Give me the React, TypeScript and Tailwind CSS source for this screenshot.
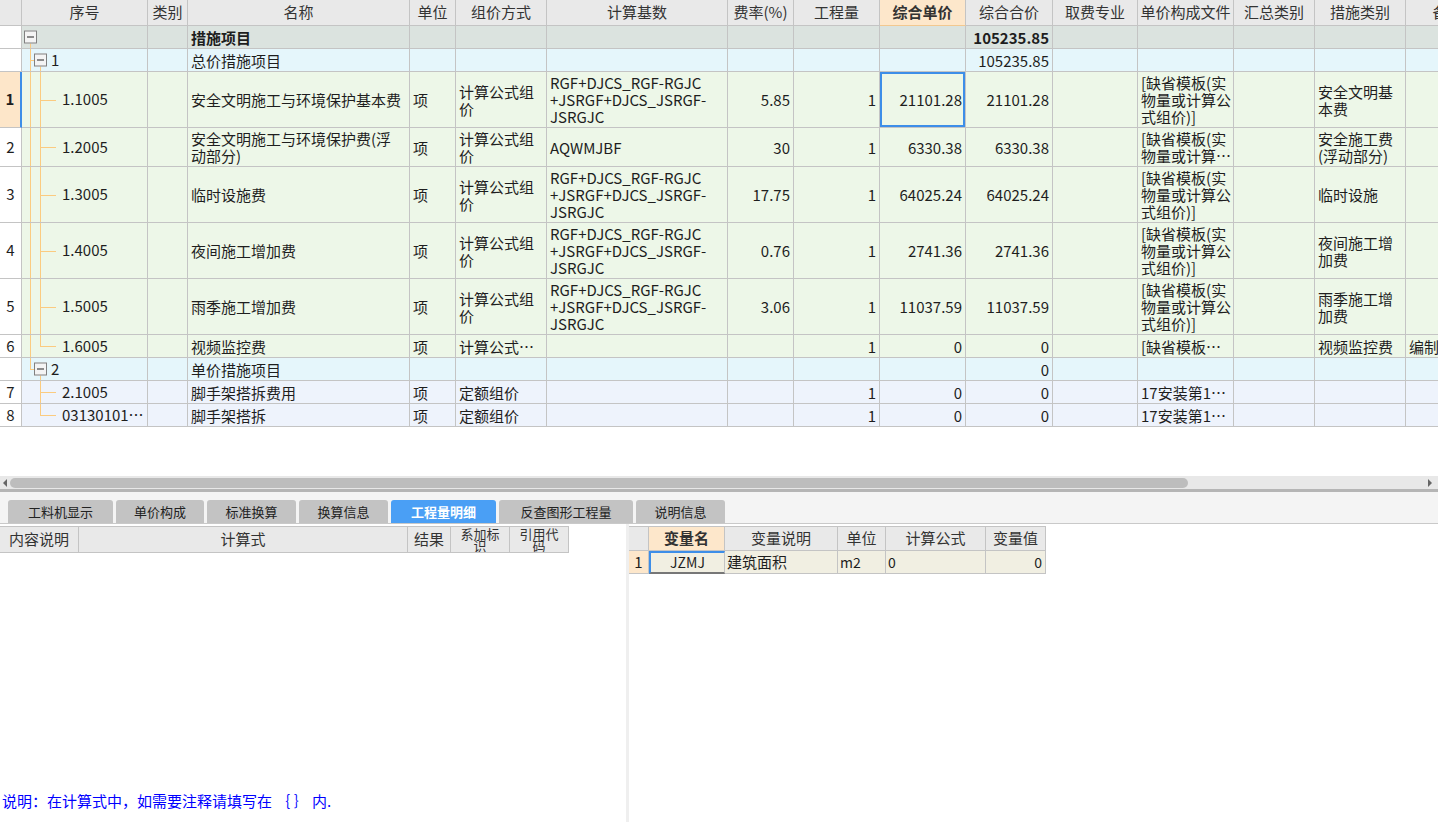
import React from "react";

type Align = "l" | "c" | "r";
type VMode = "full" | "top" | "bottom" | undefined;

interface Tree {
  v0?: VMode;
  v1?: VMode;
  box?: 0 | 1;
  stub?: boolean;
  label?: string;
}

interface Row {
  h: string;
  bg: string;
  hdr?: string;
  sel?: boolean;
  tree: Tree;
  bold?: boolean;
  cells: string[]; // 类别 名称 单位 组价方式 计算基数 费率 工程量 综合单价 综合合价 取费专业 单价构成文件 汇总类别 措施类别 备注
}

const W = ["w-[22px]", "w-[126px]", "w-[40px]", "w-[222px]", "w-[46px]", "w-[91px]", "w-[181px]", "w-[66px]", "w-[86px]", "w-[86px]", "w-[87px]", "w-[85px]", "w-[96px]", "w-[81px]", "w-[91px]", "w-[84px]"];
const HEAD = ["", "序号", "类别", "名称", "单位", "组价方式", "计算基数", "费率(%)", "工程量", "综合单价", "综合合价", "取费专业", "单价构成文件", "汇总类别", "措施类别", "备注"];
// alignment of columns 2..15
const AL: Align[] = ["l", "l", "l", "l", "l", "r", "r", "r", "r", "l", "l", "l", "l", "l"];

const BASE3 = "RGF+DJCS_RGF-RGJC\n+JSRGF+DJCS_JSRGF-\nJSRGJC";
const FILE3 = "[缺省模板(实\n物量或计算公\n式组价)]";
const CHILD: Tree = { v0: "full", v1: "full", stub: true };

const ROWS: Row[] = [
  { h: "h-[23px]", bg: "bg-[#dbe3df]", tree: { v0: "bottom", box: 0 }, bold: true, cells: ["", "措施项目", "", "", "", "", "", "", "105235.85", "", "", "", "", ""] },
  { h: "h-[23px]", bg: "bg-[#e5f6fb]", tree: { v0: "full", box: 1, v1: "bottom", label: "1" }, cells: ["", "总价措施项目", "", "", "", "", "", "", "105235.85", "", "", "", "", ""] },
  { h: "h-[56px]", bg: "bg-[#edf7e8]", hdr: "1", sel: true, tree: { ...CHILD, label: "1.1005" }, cells: ["", "安全文明施工与环境保护基本费", "项", "计算公式组\n价", BASE3, "5.85", "1", "21101.28", "21101.28", "", FILE3, "", "安全文明基\n本费", ""] },
  { h: "h-[39px]", bg: "bg-[#edf7e8]", hdr: "2", tree: { ...CHILD, label: "1.2005" }, cells: ["", "安全文明施工与环境保护费(浮\n动部分)", "项", "计算公式组\n价", "AQWMJBF", "30", "1", "6330.38", "6330.38", "", "[缺省模板(实\n物量或计算…", "", "安全施工费\n(浮动部分)", ""] },
  { h: "h-[56px]", bg: "bg-[#edf7e8]", hdr: "3", tree: { ...CHILD, label: "1.3005" }, cells: ["", "临时设施费", "项", "计算公式组\n价", BASE3, "17.75", "1", "64025.24", "64025.24", "", FILE3, "", "临时设施", ""] },
  { h: "h-[56px]", bg: "bg-[#edf7e8]", hdr: "4", tree: { ...CHILD, label: "1.4005" }, cells: ["", "夜间施工增加费", "项", "计算公式组\n价", BASE3, "0.76", "1", "2741.36", "2741.36", "", FILE3, "", "夜间施工增\n加费", ""] },
  { h: "h-[56px]", bg: "bg-[#edf7e8]", hdr: "5", tree: { ...CHILD, label: "1.5005" }, cells: ["", "雨季施工增加费", "项", "计算公式组\n价", BASE3, "3.06", "1", "11037.59", "11037.59", "", FILE3, "", "雨季施工增\n加费", ""] },
  { h: "h-[23px]", bg: "bg-[#edf7e8]", hdr: "6", tree: { v0: "full", v1: "top", stub: true, label: "1.6005" }, cells: ["", "视频监控费", "项", "计算公式…", "", "", "1", "0", "0", "", "[缺省模板…", "", "视频监控费", "编制"] },
  { h: "h-[23px]", bg: "bg-[#e5f6fb]", tree: { v0: "top", box: 1, v1: "bottom", label: "2" }, cells: ["", "单价措施项目", "", "", "", "", "", "", "0", "", "", "", "", ""] },
  { h: "h-[23px]", bg: "bg-[#eef3fc]", hdr: "7", tree: { v1: "full", stub: true, label: "2.1005" }, cells: ["", "脚手架搭拆费用", "项", "定额组价", "", "", "1", "0", "0", "", "17安装第1…", "", "", ""] },
  { h: "h-[23px]", bg: "bg-[#eef3fc]", hdr: "8", tree: { v1: "top", stub: true, label: "03130101…" }, cells: ["", "脚手架搭拆", "项", "定额组价", "", "", "1", "0", "0", "", "17安装第1…", "", "", ""] },
];

const LINE = "bg-[#fbcb80]";

function VLine({ x, mode }: { x: 0 | 1; mode: VMode }) {
  if (!mode) return null;
  const left = x === 0 ? "left-[8px]" : "left-[18px]";
  const span = mode === "full" ? "top-0 bottom-0" : mode === "top" ? "top-0 h-1/2" : "top-[calc(50%+6px)] bottom-0";
  return <div className={`absolute w-px ${LINE} ${left} ${span}`} />;
}

function Box({ level }: { level: 0 | 1 }) {
  return (
    <div className={`absolute top-1/2 -translate-y-1/2 w-[13px] h-[13px] border border-[#808080] bg-[#f4f4f4] flex items-center justify-center ${level === 0 ? "left-[2px]" : "left-[12px]"}`}>
      <div className="w-[7px] h-px bg-[#222]" />
    </div>
  );
}

function TreeCell({ t }: { t: Tree }) {
  return (
    <div className="relative h-full w-full flex items-center">
      <VLine x={0} mode={t.v0} />
      <VLine x={1} mode={t.v1} />
      {t.box === 1 && t.v0 && <div className={`absolute left-[8px] top-1/2 w-[4px] h-px ${LINE}`} />}
      {t.stub && <div className={`absolute left-[18px] top-1/2 w-[16px] h-px ${LINE}`} />}
      {t.box !== undefined && <Box level={t.box} />}
      {t.label && <span className={`relative ${t.box === 1 ? "pl-[29px]" : "pl-[40px]"}`}>{t.label}</span>}
    </div>
  );
}

function MainTable() {
  return (
    <div className="w-[1438px] overflow-hidden">
      <div className="flex w-max h-[26px] bg-[#e9e9e9] text-[#333]">
        {HEAD.map((h, i) => (
          <div
            key={i}
            className={`${W[i]} shrink-0 border-r border-b border-[#c4c4c4] flex items-center justify-center whitespace-nowrap overflow-hidden ${i === 9 ? "bg-[#fde7cb] font-bold border-b-[#f2c890]" : ""}`}
          >
            {h}
          </div>
        ))}
      </div>
      {ROWS.map((r, ri) => (
        <div key={ri} className={`flex w-max ${r.h}`}>
          <div className={`${W[0]} shrink-0 border-b border-[#c4c4c4] flex items-center justify-center ${r.sel ? "bg-[#fde6c9] font-bold border-r-2 border-r-[#3d8ee8]" : "bg-white border-r"}`}>
            {r.hdr}
          </div>
          <div className={`${W[1]} shrink-0 border-r border-b border-[#c4c4c4] ${r.bg}`}>
            <TreeCell t={r.tree} />
          </div>
          {r.cells.map((c, ci) => {
            const i = ci + 2;
            const a = AL[ci];
            const bold = r.bold && c !== "";
            return (
              <div
                key={ci}
                className={`${W[i]} shrink-0 relative border-r border-b border-[#c4c4c4] ${r.bg} flex items-center overflow-hidden px-[3px] ${a === "r" ? "justify-end text-right" : "justify-start"}`}
              >
                <span className={`whitespace-pre leading-[17px] ${bold ? "font-bold" : ""}`}>{c}</span>
                {r.sel && i === 9 && <div className="absolute inset-0 border-2 border-[#3d8ee8]" />}
              </div>
            );
          })}
        </div>
      ))}
    </div>
  );
}

const TABS = [
  { t: "工料机显示", w: "w-[105px]" },
  { t: "单价构成", w: "w-[88px]" },
  { t: "标准换算", w: "w-[89px]" },
  { t: "换算信息", w: "w-[89px]" },
  { t: "工程量明细", w: "w-[105px]", active: true },
  { t: "反查图形工程量", w: "w-[134px]" },
  { t: "说明信息", w: "w-[89px]" },
];

function Scrollbar() {
  return (
    <div className="h-[13px] bg-[#e8e8e8] flex items-center relative">
      <div className="absolute left-[3px] top-[3px] w-0 h-0 border-y-[4px] border-y-transparent border-r-[4px] border-r-[#666]" />
      <div className="ml-[10px] w-[1178px] h-[10px] rounded-full bg-[#bdbdbd]" />
      <div className="absolute right-[6px] top-[3px] w-0 h-0 border-y-[4px] border-y-transparent border-l-[4px] border-l-[#666]" />
    </div>
  );
}

function HCell({ w, children, cls = "" }: { w: string; children?: React.ReactNode; cls?: string }) {
  return (
    <div className={`${w} shrink-0 border-r border-b border-[#c4c4c4] flex items-center justify-center overflow-hidden ${cls}`}>
      {children}
    </div>
  );
}

export default function App() {
  return (
    <div className="w-[1438px] h-[822px] overflow-hidden bg-white text-[15px] text-[#1e1e1e] font-['Noto_Sans_CJK_SC',sans-serif] flex flex-col">
      <MainTable />
      <div className="h-[49px] shrink-0" />
      <Scrollbar />
      <div className="h-[3px] bg-[#b5b5b5] shrink-0" />
      <div className="h-[32px] shrink-0 bg-[#f4f4f4] border-b border-[#c9c9c9] flex items-end gap-[3px] pl-[8px]">
        {TABS.map((t) => (
          <div
            key={t.t}
            className={`${t.w} h-[23px] rounded-t-[3px] flex items-center justify-center text-[13px] ${t.active ? "bg-[#4a9ff5] text-white font-bold" : "bg-[#c3c3c3] text-[#222]"}`}
          >
            {t.t}
          </div>
        ))}
      </div>
      <div className="flex flex-1 min-h-0">
        {/* left pane */}
        <div className="w-[626px] shrink-0 flex flex-col pt-[2px]">
          <div className="flex h-[27px] bg-[#e9e9e9] border-t border-[#c4c4c4] w-max text-[#333]">
            <HCell w="w-[79px]">内容说明</HCell>
            <HCell w="w-[329px]">计算式</HCell>
            <HCell w="w-[43px]">结果</HCell>
            <HCell w="w-[59px]" cls="text-[13px] leading-[12px] items-start pt-[1px]">
              <span className="w-[44px] text-center">系加标识</span>
            </HCell>
            <HCell w="w-[59px]" cls="text-[13px] leading-[12px] items-start pt-[1px]">
              <span className="w-[44px] text-center">引用代码</span>
            </HCell>
          </div>
          <div className="mt-auto pb-[10px] pl-[2px] text-[15px] text-[#0000ff] whitespace-pre">说明：在计算式中，如需要注释请填写在 ｛ ｝ 内.</div>
        </div>
        <div className="w-[3px] shrink-0 bg-[#efefef]" />
        {/* right pane */}
        <div className="flex-1 pt-[2px]">
          <div className="flex h-[25px] w-max border-t border-[#c4c4c4] bg-[#e9e9e9] text-[#333]">
            <HCell w="w-[20px]" />
            <HCell w="w-[76px]" cls="bg-[#fde7cb] font-bold">变量名</HCell>
            <HCell w="w-[113px]">变量说明</HCell>
            <HCell w="w-[48px]">单位</HCell>
            <HCell w="w-[100px]">计算公式</HCell>
            <HCell w="w-[60px]">变量值</HCell>
          </div>
          <div className="flex h-[23px] w-max bg-[#f1efe2]">
            <HCell w="w-[20px]" cls="bg-[#fde7cb]">1</HCell>
            <div className="w-[76px] shrink-0 border-t-2 border-l-2 border-[#3d8ee8] border-b-2 border-b-[#777] border-r border-r-[#c4c4c4] flex items-center justify-center text-[14px]">JZMJ</div>
            <HCell w="w-[113px]" cls="justify-start px-[2px]">建筑面积</HCell>
            <HCell w="w-[48px]" cls="justify-start px-[2px] text-[14px]">m2</HCell>
            <HCell w="w-[100px]" cls="justify-start px-[2px] text-[14px]">0</HCell>
            <HCell w="w-[60px]" cls="justify-end px-[3px] text-[14px]">0</HCell>
          </div>
        </div>
      </div>
    </div>
  );
}
